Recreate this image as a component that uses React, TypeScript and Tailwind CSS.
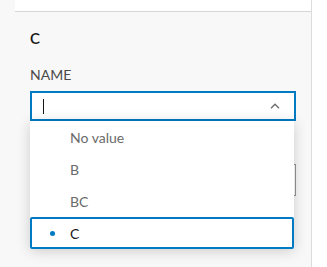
const items = ["No value", "B", "BC", "C"];

const App = () => {
  const selected = "C";
  return (
    <div
      className="w-[327px] h-[267px] bg-white flex overflow-hidden"
      style={{ fontFamily: "Lato, 'Open Sans', sans-serif" }}
    >
      <div className="w-[312px] h-full bg-[#f8f8f8] border-r border-[#dcdcdc] pl-[15px]">
        <div className="h-[12px] bg-white border-b border-[#d6d6d6] overflow-hidden">
          <p className="text-[14px] leading-[20px] text-[#8a8a8a] mt-[-17px] pl-[14px]">
            By setting the form
          </p>
        </div>
        <div className="pl-[15px] pr-[15px]">
          <h3 className="mt-[16px] text-[15px] leading-[20px] font-semibold text-[#151515]">C</h3>
          <div className="mt-[17px] text-[14px] leading-[20px] text-[#4a4a4a]">NAME</div>
          <div className="relative mt-[6px] w-[266px]">
            <div className="h-[30px] border-2 border-[#007ac2] bg-white flex items-center pl-[11px] pr-[14px]">
              <span className="w-px h-[15px] bg-[#151515]" />
              <svg className="ml-auto" width="10" height="6" viewBox="0 0 10 6">
                <path d="M1 5.2 L5 1.2 L9 5.2" fill="none" stroke="#6a6a6a" strokeWidth="1.3" />
              </svg>
            </div>
            <div className="mt-[43px] w-[266px] h-[32px] border border-[#959595] bg-white" />
            <div className="absolute left-0 top-[30px] w-[264px] bg-white shadow-[0_2px_14px_rgba(0,0,0,0.18)] rounded-b-[2px]">
              {items.map((item) => (
                <div
                  key={item}
                  className={`h-[32px] flex items-center text-[14px] ${
                    item === selected
                      ? "border-2 border-[#007ac2] rounded-[2px] text-[#151515]"
                      : "text-[#6a6a6a]"
                  }`}
                >
                  <span className="w-[38px] flex justify-center">
                    {item === selected && (
                      <span className="w-[5px] h-[5px] rounded-full bg-[#007ac2] ml-[2px]" />
                    )}
                  </span>
                  <span className={item === selected ? "" : "ml-[2px]"}>{item}</span>
                </div>
              ))}
            </div>
          </div>
        </div>
      </div>
    </div>
  );
};

export default App;
